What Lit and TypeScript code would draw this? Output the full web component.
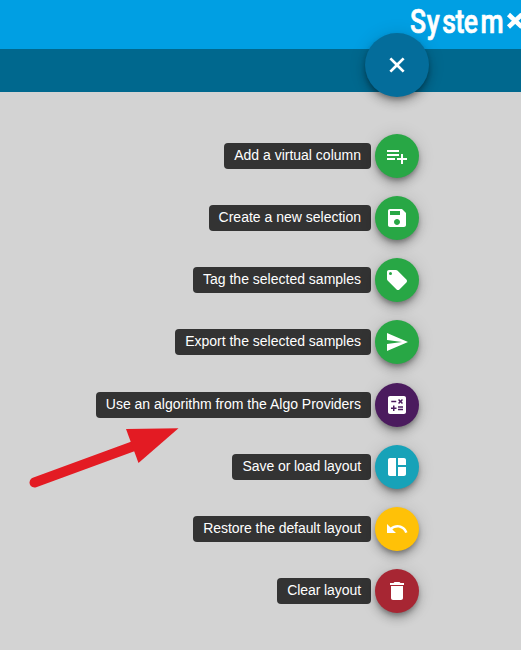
import { LitElement, html, css, svg } from "lit";
import { customElement, property } from "lit/decorators.js";

const icons: Record<string, string> = {
  listPlus: "M14 10H2v2h12v-2zm0-4H2v2h12V6zm4 8v-4h-2v4h-4v2h4v4h2v-4h4v-2h-4zM2 16h8v-2H2v2z",
  save: "M17 3H5c-1.11 0-2 .9-2 2v14c0 1.1.89 2 2 2h14c1.1 0 2-.9 2-2V7l-4-4zm-5 16c-1.66 0-3-1.34-3-3s1.34-3 3-3 3 1.34 3 3-1.34 3-3 3zm3-10H5V5h10v4z",
  tag: "M5.5,7A1.5,1.5 0 0,1 4,5.5A1.5,1.5 0 0,1 5.5,4A1.5,1.5 0 0,1 7,5.5A1.5,1.5 0 0,1 5.5,7M21.41,11.58L12.41,2.58C12.05,2.22 11.55,2 11,2H4C2.89,2 2,2.89 2,4V11C2,11.55 2.22,12.05 2.59,12.41L11.58,21.41C11.95,21.77 12.45,22 13,22C13.55,22 14.05,21.77 14.41,21.41L21.41,14.41C21.78,14.05 22,13.55 22,13C22,12.44 21.77,11.94 21.41,11.58Z",
  send: "M2.01 21L23 12 2.01 3 2 10l15 2-15 2z",
  calculate: "M19 3H5c-1.1 0-2 .9-2 2v14c0 1.1.9 2 2 2h14c1.1 0 2-.9 2-2V5c0-1.1-.9-2-2-2zM13.03 7.06L14.09 6l1.41 1.41L16.91 6l1.06 1.06-1.41 1.41 1.41 1.41-1.06 1.06-1.41-1.4-1.41 1.41-1.06-1.06 1.41-1.41-1.41-1.42zM6.25 7.72h5v1.5h-5v-1.5zM11.5 16h-2v2H8v-2H6v-1.5h2v-2h1.5v2h2V16zm6.5 1.25h-5v-1.5h5v1.5zm0-2.5h-5v-1.5h5v1.5z",
  layout: "M11 21H5c-1.1 0-2-.9-2-2V5c0-1.1.9-2 2-2h6v18zm2 0h6c1.1 0 2-.9 2-2v-7h-8v9zm8-11V5c0-1.1-.9-2-2-2h-6v7h8z",
  undo: "M12.5 8c-2.65 0-5.05.99-6.9 2.6L2 7v9h9l-3.62-3.62c1.39-1.16 3.16-1.88 5.12-1.88 3.54 0 6.55 2.31 7.6 5.5l2.37-.78C21.08 11.03 17.15 8 12.5 8z",
  trash: "M6 19c0 1.1.9 2 2 2h8c1.1 0 2-.9 2-2V7H6v12zM19 4h-3.5l-1-1h-5l-1 1H5v2h14V4z",
  close: "M19.6 6.3L17.7 4.4 12 10.1 6.3 4.4 4.4 6.3 10.1 12 4.4 17.7 6.3 19.6 12 13.9 17.7 19.6 19.6 17.7 13.9 12z",
};

const actions = [
  { label: "Add a virtual column", icon: "listPlus", tone: "green", fit: "" },
  { label: "Create a new selection", icon: "save", tone: "green", fit: "" },
  { label: "Tag the selected samples", icon: "tag", tone: "green", fit: "" },
  { label: "Export the selected samples", icon: "send", tone: "green", fit: "" },
  { label: "Use an algorithm from the Algo Providers", icon: "calculate", tone: "purple", fit: "" },
  { label: "Save or load layout", icon: "layout", tone: "teal", fit: "tight" },
  { label: "Restore the default layout", icon: "undo", tone: "amber", fit: "tight" },
  { label: "Clear layout", icon: "trash", tone: "red", fit: "tight" },
];

@customElement("action-icon")
class ActionIcon extends LitElement {
  @property() name = "";
  static styles = css`
    :host { display: block; width: 24px; height: 24px; }
    svg { display: block; width: 100%; height: 100%; fill: #fff; }
  `;
  render() {
    return html`<svg viewBox="0 0 24 24">${svg`<path fill-rule="evenodd" d=${icons[this.name] ?? ""}></path>`}</svg>`;
  }
}

@customElement("app-root")
class AppRoot extends LitElement {
  static styles = css`
    :host {
      display: block;
      position: relative;
      height: 650px;
      overflow: hidden;
      background: #d3d3d3;
      font-family: "Liberation Sans", Arial, sans-serif;
      font-size: 14px;
    }
    .top { height: 49px; background: #009fe3; display: flex; justify-content: flex-end; }
    .logo { display: block; width: 111px; height: 49px; fill: #fff; }
    .logo text {
      font-family: Roboto, sans-serif; font-size: 34px; font-weight: 500;
      stroke: #fff; stroke-width: 0.7; stroke-linejoin: round;
    }
    .cross { stroke: #fff; stroke-width: 4.6; fill: none; }
    .bar { height: 43px; background: #00688e; }
    .toggle {
      position: absolute; left: 365px; top: 33px;
      width: 64px; height: 64px; border-radius: 50%;
      background: #046d9b;
    }
    .disc {
      display: flex; align-items: center; justify-content: center;
      padding: 0; border: 0;
      box-shadow: 0 3px 5px -1px rgba(0,0,0,.3), 0 6px 10px rgba(0,0,0,.2), 0 1px 18px rgba(0,0,0,.12);
    }
    .menu {
      display: flex; flex-direction: column; gap: 18.15px;
      margin: 0; padding: 42px 102px 0 0; list-style: none;
    }
    .row { display: flex; align-items: center; justify-content: flex-end; gap: 4px; height: 44px; }
    .label {
      box-sizing: border-box; height: 26px; padding: 0 10px;
      border-radius: 4px; background: #333; color: #fff;
      line-height: 25px; white-space: nowrap;
    }
    .tight { letter-spacing: -0.07px; }
    .action { width: 44px; height: 44px; flex: none; border-radius: 50%; }
    .green { background: #28a745; }
    .purple { background: #4b1b5e; }
    .teal { background: #17a2b8; }
    .amber { background: #ffc107; }
    .red { background: #a72633; }
    .arrow { position: absolute; left: 20px; top: 415px; width: 170px; height: 80px; }
  `;
  render() {
    return html`
      <header class="top">
        <svg class="logo" viewBox="0 0 111 49">
          <text transform="scale(.78 1)" x="0 21.5 41.5 58.5 69 90.5" y="33.3">System</text>
          <path class="cross" d="M98.500 14.500L112 27M98.500 27L112 14.500"></path>
        </svg>
      </header>
      <div class="bar"></div>
      <button class="toggle disc" aria-label="Close"><action-icon name="close"></action-icon></button>
      <ul class="menu">
        ${actions.map((a) => html`
          <li class="row">
            <span class="label ${a.fit}">${a.label}</span>
            <button class="action disc ${a.tone}" aria-label=${a.label}><action-icon name=${a.icon}></action-icon></button>
          </li>`)}
      </ul>
      <svg class="arrow" viewBox="0 0 170 80">
        <path d="M14.5 67.5L114 31" stroke="#e31b23" stroke-width="10" stroke-linecap="round"></path>
        <path d="M106 14L158.500 13.300L118.500 48Z" fill="#e31b23"></path>
      </svg>
    `;
  }
}
